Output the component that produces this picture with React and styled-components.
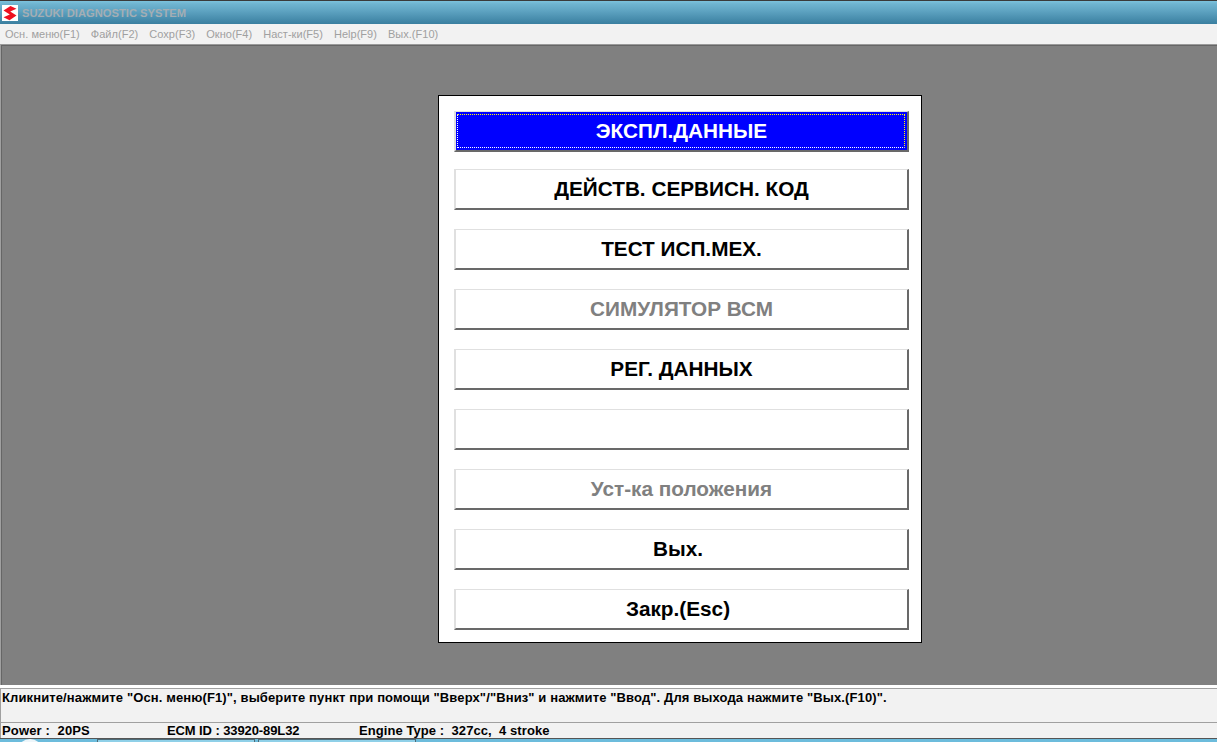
import React from "react"
import styled, { createGlobalStyle } from "styled-components"

const GlobalStyle = createGlobalStyle`
  html, body {
    margin: 0;
    padding: 0;
    height: 100%;
    overflow: hidden;
  }
  body {
    font-family: "Liberation Sans", Arial, sans-serif;
  }
`

const Window = styled.div`
  display: flex;
  flex-direction: column;
  width: 1217px;
  height: 742px;
  overflow: hidden;
  background: #f2f2f2;
`

const TitleBar = styled.div`
  display: flex;
  align-items: center;
  gap: 2px;
  height: 23px;
  padding: 0 0 0 2px;
  border-top: 1px solid #3a3a3a;
  background: linear-gradient(#7cc2dc 0, #6fb4d0 3px, #5ea3c1 10px, #3a7fa0 100%);
`

const TitleText = styled.span`
  font-size: 11.2px;
  font-weight: bold;
  color: #a4aeb4;
  white-space: nowrap;
`

const LogoBox = styled.svg`
  display: block;
  width: 16px;
  height: 16px;
  margin: 0 2px 0 0;
  flex: none;
`

const MenuBar = styled.div`
  display: flex;
  gap: 11px;
  align-items: center;
  height: 20px;
  padding-left: 5px;
  background: #f2f2f2;
`

const MenuItem = styled.span`
  font-size: 11px;
  letter-spacing: 0.03px;
  color: #a0a0a0;
  white-space: nowrap;
`

const Desktop = styled.div`
  flex: none;
  height: 641px;
  box-sizing: border-box;
  padding: 50px 0 0 437px;
  background: #808080;
  border-top: 1px solid #9a9a9a;
  border-left: 1px solid #a0a0a0;
  box-shadow: inset 1px 1px 0 #666666;
`

const Panel = styled.div`
  display: flex;
  flex-direction: column;
  box-sizing: border-box;
  width: 484px;
  height: 548px;
  padding: 15px 12px 0 15px;
  background: #ffffff;
  border: 1px solid #000000;
`

const MenuButton = styled.button`
  position: relative;
  display: flex;
  align-items: center;
  justify-content: center;
  flex: none;
  box-sizing: border-box;
  width: 455px;
  height: 41px;
  margin-top: ${(p) => p.$gap}px;
  padding: 0 ${(p) => p.$shift || 0}px 1px 0;
  font-family: "Liberation Sans", Arial, sans-serif;
  font-size: 20.75px;
  font-weight: bold;
  color: ${(p) => (p.$active ? "#ffffff" : p.$disabled ? "#808080" : "#000000")};
  background: ${(p) => (p.$active ? "#0000ff" : "#ffffff")};
  border-style: solid;
  border-width: 1px 2px 2px 2px;
  border-color: #e0e0e0 #696969 #696969 #e0e0e0;
`

/* focus frame of the selected button: yellow top and right, white left and bottom */
const FocusFrame = styled.span`
  position: absolute;
  top: 2px;
  right: 2px;
  bottom: 2px;
  left: 1px;
  border-style: dotted;
  border-width: 1px;
  border-color: #ffff00 #ffff00 #ffffff #ffffff;
`

const HintBar = styled.div`
  flex: none;
  height: 35px;
  margin-top: 3px;
  padding: 1px 0 0 1px;
  box-sizing: border-box;
  background: #f2f2f2;
  border-top: 1px solid #a0a0a0;
  border-bottom: 1px solid #a0a0a0;
  border-left: 1px solid #a0a0a0;
  box-shadow: 0 -3px 0 #ffffff;
  font-size: 13px;
  font-weight: bold;
  letter-spacing: 0.12px;
  color: #000000;
  white-space: nowrap;
`

const StatusBar = styled.div`
  display: flex;
  align-items: center;
  flex: none;
  height: 15px;
  padding-left: 1px;
  background: #f2f2f2;
  border-left: 1px solid #a0a0a0;
  font-size: 13px;
  font-weight: bold;
  color: #000000;
  white-space: pre;
`

const StatusItem = styled.span`
  flex: none;
  width: ${(p) => p.$width}px;
  letter-spacing: ${(p) => p.$spacing || 0}px;
`

const Taskbar = styled.div`
  display: flex;
  flex: none;
  gap: 3px;
  box-sizing: border-box;
  height: 4px;
  padding-left: 97px;
  position: relative;
  overflow: hidden;
  background: #6cbcdc;
  border-top: 1px solid #555555;
`

const StartOrb = styled.div`
  position: absolute;
  left: 17px;
  top: 0;
  width: 26px;
  height: 26px;
  border-radius: 50%;
  background: #eef6fa;
`

const TaskButton = styled.div`
  flex: none;
  box-sizing: border-box;
  width: 158px;
  height: 6px;
  background: #8fd0e8;
  border: 1px solid #4d6b78;
`

const buttons = [
  { label: "ЭКСПЛ.ДАННЫЕ", active: true, gap: 0 },
  { label: "ДЕЙСТВ. СЕРВИСН. КОД", gap: 17 },
  { label: "ТЕСТ ИСП.МЕХ.", gap: 19 },
  { label: "СИМУЛЯТОР ВСМ", disabled: true, gap: 19 },
  { label: "РЕГ. ДАННЫХ", gap: 19 },
  { label: "", gap: 19 },
  { label: "Уст-ка положения", disabled: true, gap: 19 },
  { label: "Вых.", gap: 19, shift: 7 },
  { label: "Закр.(Esc)", gap: 19, shift: 7 },
]

const menu = ["Осн. меню(F1)", "Файл(F2)", "Сохр(F3)", "Окно(F4)", "Наст-ки(F5)", "Help(F9)", "Вых.(F10)"]

const App = () => {
  return (
    <Window>
      <GlobalStyle />
      <TitleBar>
        <LogoBox viewBox="0 0 16 16">
          <rect width="16" height="16" fill="#ffffff" />
          <path d="M8.5 1 L14.5 3.8 L8.2 6.5 L14.5 10.5 L7.5 15.2 L1.5 12.2 L7.8 9.5 L1.5 5.5 Z" fill="#ee1020" />
        </LogoBox>
        <TitleText>SUZUKI DIAGNOSTIC SYSTEM</TitleText>
      </TitleBar>
      <MenuBar>
        {menu.map((item) => (
          <MenuItem key={item}>{item}</MenuItem>
        ))}
      </MenuBar>
      <Desktop>
        <Panel>
          {buttons.map((b, i) => (
            <MenuButton key={i} $active={b.active} $disabled={b.disabled} $gap={b.gap} $shift={b.shift}>
              {b.active && <FocusFrame />}
              {b.label}
            </MenuButton>
          ))}
        </Panel>
      </Desktop>
      <HintBar>
        Кликните/нажмите "Осн. меню(F1)", выберите пункт при помощи "Вверх"/"Вниз" и нажмите "Ввод". Для выхода нажмите "Вых.(F10)".
      </HintBar>
      <StatusBar>
        <StatusItem $width={165} $spacing={0.15}>Power :  20PS</StatusItem>
        <StatusItem $width={192} $spacing={-0.1}>ECM ID : 33920-89L32</StatusItem>
        <StatusItem $width={220} $spacing={0.07}>Engine Type :  327cc,  4 stroke</StatusItem>
      </StatusBar>
      <Taskbar>
        <StartOrb />
        <TaskButton />
        <TaskButton />
      </Taskbar>
    </Window>
  )
}

export default App
